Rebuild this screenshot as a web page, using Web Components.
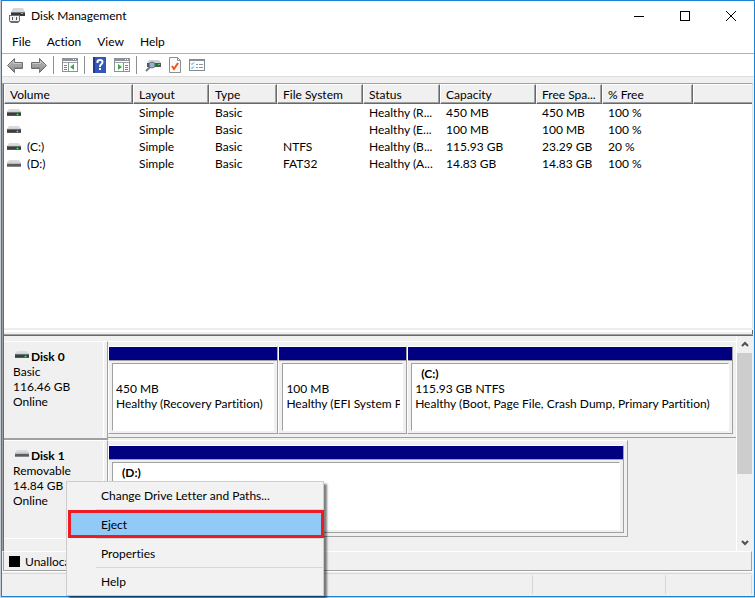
<!DOCTYPE html>
<html lang="en">
<head>
<meta charset="utf-8">
<title>Disk Management</title>
<style>
html, body { height: 100%; margin: 0; }
body {
  --face: #f0f0f0; --hi: #ffffff; --shade: #a0a0a0; --dark: #696969; --soft: #d7d7d7;
  font: 12px/15px Lato, "Open Sans", sans-serif; font-variant-ligatures: none;
  color: #000; background: #c4cdd6; overflow: hidden;
}
</style>
</head>
<body>
<dm-window>
  <dm-titlebar>Disk Management</dm-titlebar>
  <dm-menubar items="File,Action,View,Help"></dm-menubar>
  <dm-toolbar></dm-toolbar>
  <dm-volumes></dm-volumes>
  <dm-diskpane>
    <dm-disk name="Disk 0" kind="Basic" size="116.46 GB" state="Online" led>
      <dm-part style="flex-grow:170" size="450 MB" state="Healthy (Recovery Partition)"></dm-part>
      <dm-part style="flex-grow:128" size="100 MB" state="Healthy (EFI System Partition)"></dm-part>
      <dm-part style="flex-grow:327" label="(C:)" size="115.93 GB NTFS" state="Healthy (Boot, Page File, Crash Dump, Primary Partition)"></dm-part>
    </dm-disk>
    <dm-disk name="Disk 1" kind="Removable" size="14.84 GB" state="Online" short>
      <dm-part style="flex-grow:1" label="(D:)"></dm-part>
    </dm-disk>
  </dm-diskpane>
  <dm-legend>Unallocated</dm-legend>
  <dm-status></dm-status>
  <dm-context slot="overlay">
    <dm-item>Change Drive Letter and Paths...</dm-item>
    <dm-item active>Eject</dm-item>
    <dm-item>Properties</dm-item>
    <dm-item>Help</dm-item>
  </dm-context>
</dm-window>

<script>
const define = (name, render) => customElements.define(name, class extends HTMLElement {
  connectedCallback() {
    if (this.shadowRoot) return;
    this.attachShadow({ mode: 'open' }).innerHTML =
      '<style>*{box-sizing:border-box}:host{display:block;box-sizing:border-box}button{font:inherit;color:inherit;background:none;border:0;padding:0;margin:0}svg{display:block;flex:none}</style>' + render(this);
  }
});
const attr = (el, name) => el.getAttribute(name) || '';
const drive = led => `<svg width="14" height="7" viewBox="0 0 14 7" aria-hidden="true">
  <path d="M2 0h10l2 3H0z" fill="#d9dcdf"/><rect y="2" width="14" height="2" fill="#cdd1d4"/>
  <rect y="3" width="14" height="4" fill="${led ? '#3b3e40' : '#5c5c5e'}"/><rect y="3" width="14" height="1" fill="${led ? '#6c7073' : '#b9bcbf'}"/><rect y="6" width="14" height="1" fill="${led ? '#55585a' : '#85878a'}"/>
  ${led ? '<path d="M10 4h1v1h1v1h-1v1h-1v-1h-1v-1h1z" fill="#2f8f3f"/><rect x="10" y="5" width="1" height="1" fill="#39f24f"/>' : ''}</svg>`;

define('dm-window', () => `<style>
  :host{display:flex;flex-direction:column;height:calc(100vh - 1px);margin-left:1px;background:var(--face);border:1px solid #1883d7}
  </style><slot></slot><slot name="overlay"></slot>`);

define('dm-titlebar', () => `<style>
  :host{display:flex;align-items:center;background:#fff;height:29px;flex:none;padding-left:7px}
  span{flex:1;padding-left:6px} button{width:46px;height:29px;display:grid;place-items:center}
  </style>
  <svg width="16" height="15" viewBox="0 0 16 15" aria-hidden="true">
    <path d="M4 0h10l2 4H2z" fill="#d5d9dc"/><rect x="2" y="4" width="14" height="4" fill="#36393b"/><rect x="2" y="4" width="14" height="1" fill="#77797b"/><rect x="12" y="5" width="2" height="1" fill="#3fe254"/>
    <path d="M0 7h11v6l-2 2H2l-2-2z" fill="#6a6c6e"/>
    <rect x="1" y="8" width="9" height="5" fill="#f2f2f2"/><rect x="3" y="9" width="1" height="3" fill="#555"/><rect x="7" y="9" width="1" height="3" fill="#555"/>
  </svg>
  <span><slot></slot></span>
  <button aria-label="Minimize"><svg width="10" height="10"><rect y="5" width="10" height="1"/></svg></button>
  <button aria-label="Maximize"><svg width="10" height="10"><rect x=".5" y=".5" width="9" height="9" fill="none" stroke="#000"/></svg></button>
  <button aria-label="Close"><svg width="10" height="10"><path d="M0 0l10 10M10 0L0 10" stroke="#000" fill="none"/></svg></button>`);

define('dm-menubar', el => `<style>
  :host{display:flex;gap:16px;background:#fff;height:24px;flex:none;padding:0 10px;border-bottom:1px solid #aeb0ba}
  </style>${attr(el, 'items').split(',').map(t => `<button>${t}</button>`).join('')}`);

const arrow = `<path d="M.5 7.500L7.500 .5v4h8v6h-8v4z" fill="#a3a3a3" stroke="#6e6e6e"/><path d="M2 7.500L6.500 3v2.500h8" fill="none" stroke="#c9c9c9"/><path d="M3 9l4 4V9.500h8" fill="none" stroke="#8a8a8a"/>`;
const tree = flip => `<rect x=".5" y=".5" width="15" height="13" fill="#fff" stroke="#8d9299"/><rect x="1" y="1" width="14" height="2" fill="#8c939b"/>
  <path d="M1 4.500h14" stroke="#9aa0a6"/><path d="M11 1.500h1M13 1.500h1" stroke="#fff"/>
  ${flip ? `<path d="M9.500 5v8" stroke="#8d9299"/><path d="M11 7.500h3M11 9.500h3M11 11.500h3" stroke="#6f7f90"/><path d="M4 6v6l4-3z" fill="#3bab3b"/>`
         : `<path d="M6.500 5v8" stroke="#8d9299"/><path d="M2 7.500h3M2 9.500h3M2 11.500h3" stroke="#6f7f90"/><path d="M12 6v6L8 9z" fill="#3bab3b"/>`}`;
define('dm-toolbar', () => `<style>
  :host{display:flex;align-items:center;background:#fff;height:23px;flex:none;padding:0 5px;border-bottom:1px solid #dcdcdc;gap:6px}
  i{width:1px;height:18px;background:#8f8f8f;margin-right:2px} button+button{margin-left:2px}
  </style>
  <button aria-label="Back"><svg width="16" height="15">${arrow}</svg></button>
  <button aria-label="Forward"><svg width="16" height="15"><g transform="matrix(-1 0 0 1 16 0)">${arrow}</g></svg></button>
  <i></i>
  <button aria-label="Show or hide console tree"><svg width="16" height="14">${tree(false)}</svg></button>
  <i></i>
  <button aria-label="Help"><svg width="13" height="16"><rect width="13" height="16" fill="#3257b8"/><rect width="2" height="16" fill="#1f3c8c"/>
    <path d="M4.500 6V4.500Q4.500 3 7 3T9.500 5Q9.500 6.500 8 7.500Q7 8.200 7 10" fill="none" stroke="#fff" stroke-width="2"/><rect x="6" y="11" width="2" height="2" fill="#fff"/></svg></button>
  <button aria-label="Show or hide action pane"><svg width="16" height="14">${tree(true)}</svg></button>
  <i></i>
  <button aria-label="Settings"><svg width="16" height="14"><path d="M4 2h10l2 3H2z" fill="#cfd3d6"/><rect x="2" y="5" width="14" height="4" fill="#50565a"/><rect x="13" y="6" width="2" height="1" fill="#3fe254"/>
    <circle cx="7" cy="7" r="3" fill="#8fb4cc" stroke="#63747f"/><path d="M5 9L1 13" stroke="#707a80" stroke-width="2"/></svg></button>
  <button aria-label="Check"><svg width="12" height="16"><path d="M.5 .5h8l3 3v12H.5z" fill="#fafafa" stroke="#8e8e8e"/><path d="M8.500 .5v3h3" fill="none" stroke="#8e8e8e"/>
    <path d="M3 9l2 3 4-6" fill="none" stroke="#f0541e" stroke-width="2"/></svg></button>
  <button aria-label="List"><svg width="16" height="12"><rect x=".5" y=".5" width="15" height="11" fill="#fff" stroke="#7f8a94"/><rect x="1" y="1" width="14" height="1" fill="#8a949e"/>
    <path d="M2 4.500l1 1 2-2M2 8.500l1 1 2-2" fill="none" stroke="#2c8bd8"/><path d="M7 5.500h2M10 5.500h4M7 8.500h2M10 8.500h4" stroke="#8a949e"/></svg></button>`);

const cols = [['Volume',129],['Layout',76],['Type',68],['File System',86],['Status',77],['Capacity',96],['Free Spa...',66],['% Free',91],['',0]];
const rows = [
  ['', 'Simple','Basic','','Healthy (R...','450 MB','450 MB','100 %'],
  ['', 'Simple','Basic','','Healthy (E...','100 MB','100 MB','100 %'],
  ['(C:)','Simple','Basic','NTFS','Healthy (B...','115.93 GB','23.29 GB','20 %'],
  ['(D:)','Simple','Basic','FAT32','Healthy (A...','14.83 GB','14.83 GB','100 %']];
define('dm-volumes', () => `<style>
  :host{flex:1 1 0;margin:6px 1px 0 0;min-height:0;background:#fff;border:1px solid var(--shade);border-right-color:#e3e3e3;border-bottom:0;box-shadow:inset 1px 0 var(--dark);padding-left:1px;overflow:hidden}
  table{border-collapse:separate;border-spacing:0;table-layout:fixed;width:100%}
  th,td{padding:0 0 0 6px;text-align:left;font-weight:400;white-space:nowrap;overflow:hidden}
  th{height:20px;padding-left:5px;background:var(--face);border:1px solid;border-color:#fff var(--dark) var(--dark) #fff;box-shadow:inset -1px -1px var(--shade)}
  th:last-child{border-right:0;box-shadow:inset 0 -1px var(--shade)}
  td{height:17px} td:first-child{padding-left:3px}
  div{display:flex;align-items:center;gap:6px}
  </style><table><colgroup>${cols.map(c => `<col${c[1] ? ` style="width:${c[1]}px"` : ''}>`).join('')}</colgroup>
  <thead><tr>${cols.map(c => `<th scope="col">${c[0]}</th>`).join('')}</tr></thead>
  <tbody>${rows.map((r, n) => `<tr>${r.map((c, i) => `<td>${i ? c : `<div>${drive(n < 3)}${c}</div>`}</td>`).join('')}<td></td></tr>`).join('')}</tbody></table>`);

define('dm-diskpane', () => `<style>
  :host{display:flex;flex:none;margin-right:1px;border-left:1px solid var(--shade);box-shadow:inset 1px 0 var(--dark);padding-left:1px}
  main{flex:1;min-width:0;display:flex;flex-direction:column}
  .split{flex:none;height:8px;background:#fff;border-top:2px solid #ededed;border-bottom:1px solid var(--dark);box-shadow:inset 0 -1px var(--shade),inset -1px 0 var(--dark),inset 0 -3px var(--face)}
  .body{display:flex}
  .rows{flex:1;min-width:0;padding:5px 0 12px;border-right:1px solid #fff}
  </style><main><div class="split"></div><div class="body"><div class="rows"><slot></slot></div><dm-scroll></dm-scroll></div></main>`);

define('dm-scroll', () => `<style>
  :host{display:flex;flex-direction:column;width:15px;margin-right:1px;flex:none}
  button{height:17px;display:grid;place-items:center} .track{flex:1} .thumb{height:67%;background:#cdcdcd}
  </style><button aria-label="Scroll up"><svg width="8" height="7"><path d="M1 5l3-3 3 3" fill="none" stroke="#505050" stroke-width="2"/></svg></button>
  <div class="track"><div class="thumb"></div></div>
  <button aria-label="Scroll down"><svg width="8" height="7"><path d="M1 2l3 3 3-3" fill="none" stroke="#505050" stroke-width="2"/></svg></button>`);

define('dm-disk', el => `<style>
  :host{display:flex;height:99px}
  .info{flex:none;width:104px;padding:6px 0 0 9px;border-top:1px solid #fff;border-bottom:2px solid var(--shade);border-right:1px solid var(--shade);box-shadow:inset -3px 0 var(--face),inset -4px 0 #fff}
  :host([short]) .info{border-bottom:1px solid #fff}
  b{display:flex;gap:2px;height:16px;align-items:center;padding-left:2px} svg{margin-bottom:4px}
  .strip{display:flex;flex:1;min-width:0;border-top:1px solid #fff;border-bottom:1px solid var(--shade);margin-bottom:2px;padding:4px 3px 3px 0}
  :host([short]) .strip{flex:0 1 71%;border-right:1px solid var(--shade)}
  </style><div class="info"><b>${drive(el.hasAttribute('led'))}${attr(el, 'name')}</b>${attr(el, 'kind')}<br>${attr(el, 'size')}<br>${attr(el, 'state')}</div>
  <div class="strip"><slot></slot></div>`);

define('dm-part', el => `<style>
  :host{flex:1 1 0;min-width:0;display:flex;flex-direction:column;border:1px solid;border-color:#fff var(--shade) var(--shade) #fff}
  .bar{height:13px;flex:none;background:#000080;}
  .pad{flex:1;min-height:0;padding:2px 3px;border-top:1px solid var(--shade)}
  .box{height:100%;background:#fff;border:1px solid;border-color:var(--shade) #fff #fff var(--shade);padding:2px 2px 0 3px}
  .clip{overflow:hidden;white-space:nowrap} b{display:block;height:15px;padding-left:6px}
  </style><div class="bar"></div><div class="pad"><div class="box"><div class="clip"><b>${attr(el, 'label')}</b>${attr(el, 'size')}<br>${attr(el, 'state')}</div></div></div>`);

define('dm-legend', () => `<style>
  :host{display:flex;flex:none;align-items:center;gap:5px;height:20px;margin:0 2px 0 1px;padding-left:5px;border:1px solid;border-color:#fff var(--shade) var(--shade) var(--shade)}
  i{width:11px;height:11px;background:#000}
  </style><i></i><slot></slot>`);

define('dm-status', () => `<style>
  :host{display:flex;flex:none;height:25px;border-top:1px solid #fff;padding-right:2px}
  .in{display:flex;flex:1;border-top:1px solid var(--soft);margin-top:1px;padding:1px 0 2px}
  span{border-right:1px solid var(--soft);flex:85 1 0} .a{flex-grow:532} .b{flex-grow:133}
  </style><div class="in"><span class="a"></span><span class="b"></span><span></span></div>`);

define('dm-context', () => `<style>
  :host{position:absolute;left:66px;top:481px;width:258px;padding-left:1px;background:#f2f2f2;border:1px solid #ccc;box-shadow:3px 3px 2px rgba(0,0,0,.5)}
  </style><div role="menu"><slot></slot></div>`);
define('dm-item', () => `<style>
  :host{border-bottom:1px solid;border-image:linear-gradient(90deg,transparent 29px,#d7d7d7 29px) 1}
  :host(:last-child){border:0}
  button{display:block;width:100%;height:28px;padding-left:33px;text-align:left}
  :host(:first-child) button,:host(:last-child) button{height:27px}
  :host([active]){margin-right:-1px}
  :host([active]) button{border:3px solid #ed1c24;background:#91c9f7;padding-left:30px}
  </style><button role="menuitem"><slot></slot></button>`);
</script>
</body>
</html>
